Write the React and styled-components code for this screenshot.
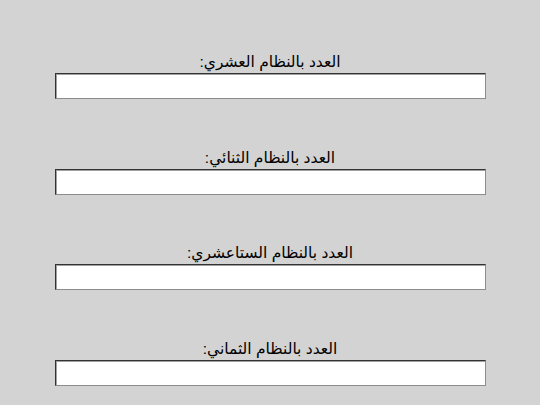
import React from "react"
import styled, { createGlobalStyle } from "styled-components"

const GlobalStyle = createGlobalStyle`
  html, body {
    margin: 0;
    padding: 0;
    background: #d3d3d3;
  }
`

const Page = styled.div`
  direction: rtl;
  min-height: 405px;
  padding-top: 53px;
  box-sizing: border-box;
  display: flex;
  flex-direction: column;
  align-items: center;
  gap: 49.67px;
  font-family: "Liberation Sans", Arial, "DejaVu Sans", sans-serif;
`

const Field = styled.div`
  display: flex;
  flex-direction: column;
  align-items: center;
  gap: 2px;
`

const Label = styled.label`
  font-size: 15.5px;
  line-height: 18px;
  color: #000;
`

const Input = styled.input`
  width: 431px;
  height: 26px;
  box-sizing: border-box;
  margin: 0;
  background: #fff;
  border: 1px solid;
  border-color: #333 #8c8c8c #8c8c8c #333;
  box-shadow: inset 1px 1px 0 #a0a0a0;
  font: 14px "Liberation Sans", Arial, sans-serif;
  outline: none;
`

const fields = [
  "العدد بالنظام العشري:",
  "العدد بالنظام الثنائي:",
  "العدد بالنظام الستاعشري:",
  "العدد بالنظام الثماني:",
]

export default function App() {
  return (
    <>
      <GlobalStyle />
      <Page>
        {fields.map((text, i) => (
          <Field key={i}>
            <Label htmlFor={"f" + i}>{text}</Label>
            <Input id={"f" + i} type="text" />
          </Field>
        ))}
      </Page>
    </>
  )
}
